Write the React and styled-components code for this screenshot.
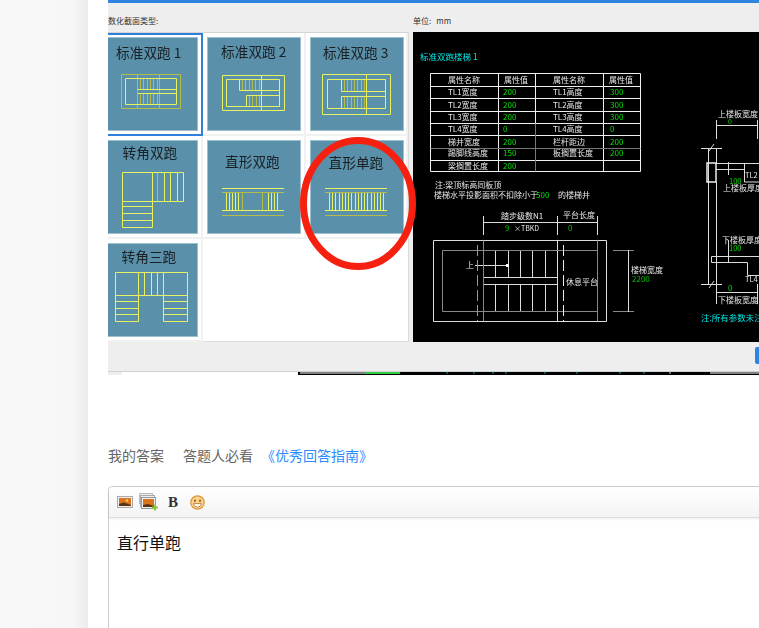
import React from 'react'
import styled, { createGlobalStyle } from 'styled-components'

const CJK = '"Noto Sans CJK SC", "Liberation Sans", sans-serif'

const GlobalStyle = createGlobalStyle`
  html, body {
    margin: 0;
    padding: 0;
    height: 100%;
    overflow: hidden;
    background: #fff;
    font-family: ${CJK};
  }
`

const Page = styled.div`
  display: flex;
  height: 628px;
  overflow: hidden;
`

const Sidebar = styled.div`
  flex: 0 0 88px;
  background: linear-gradient(to right, #f8f8f8 0, #f7f7f7 72px, #ebebeb 88px);
`

const Main = styled.div`
  flex: 1;
  min-width: 0;
  padding-left: 20px;
  overflow: hidden;
`

const Frame = styled.div`
  height: 372px;
  overflow: hidden;
  box-sizing: border-box;
  border-bottom: 1px solid #cfcfd6;
  background: #eee;
`

const Dialog = styled.div`
  margin-left: -8px;
  width: 700px;
`

const BlueBar = styled.div`
  height: 3px;
  background: #2f84e0;
`

const LabelRow = styled.div`
  display: flex;
  height: 29px;
  align-items: center;
  padding-top: 5px;
  box-sizing: border-box;
  font-size: 8px;
  color: #333;
`

const LabelLeft = styled.div`
  flex: 0 0 313px;
`

const Unit = styled.span`
  margin-left: 5px;
`

const Body = styled.div`
  display: flex;
  gap: 4px;
  height: 310px;
`

const Grid = styled.div`
  flex: 0 0 309px;
  min-width: 0;
  box-sizing: border-box;
  display: grid;
  grid-template-columns: 103px 103px 102px;
  grid-auto-rows: 103px;
  background: #fff;
  border: 1px solid #dcdcdc;
  border-left: 0;
  border-top-color: #d4d4d4;
`

const Cell = styled.div`
  box-sizing: border-box;
  border-style: solid;
  border-color: ${p => (p.$selected ? '#2f7fdc' : '#f1f1f1')};
  border-width: ${p => (p.$selected ? '2px' : '0 2px 2px 0')};
  padding: ${p => (p.$selected ? '2px 0 0 2px' : '4px 0 0 4px')};
`

const Card = styled.svg`
  display: block;
  width: 94px;
  height: 94px;
  background: #5a90a9;
  outline: 1px solid #9dbfce;
  outline-offset: -1px;
  filter: blur(0.25px);
`

const ThumbTitle = styled.text`
  font-family: ${CJK};
  font-size: 13.7px;
  fill: #1a2024;
`

const Preview = styled.svg`
  display: block;
  flex: 0 0 346px;
  width: 346px;
  height: 310px;
  background: #000;
  filter: blur(0.35px);
`

const CadText = styled.text`
  font-family: ${CJK};
  font-size: ${p => p.$size || 8}px;
  fill: ${p => p.$color || '#e8e8e8'};
`

const DialogFooter = styled.div`
  height: 29px;
  padding: 5px 0 0 655px;
  box-sizing: border-box;
`

const BlueButton = styled.div`
  width: 40px;
  height: 17px;
  border-radius: 2px;
  background: #2f84e0;
`

const Strip = styled.svg`
  display: block;
  width: 651px;
  height: 3px;
`

const Tabs = styled.div`
  display: flex;
  align-items: center;
  height: 20px;
  margin-top: 70px;
  font-size: 14px;
  line-height: 20px;
  color: #666;
`

const Tab = styled.span`
  margin-right: ${p => p.$gap}px;
`

const GuideLink = styled.span`
  color: #2e8bff;
`

const Editor = styled.div`
  width: 720px;
  height: 200px;
  margin-top: 21px;
  border: 1px solid #ccc;
  border-radius: 4px 4px 0 0;
  background: #fff;
`

const Toolbar = styled.div`
  display: flex;
  align-items: center;
  height: 30px;
  padding-left: 8px;
  border-bottom: 1px solid #ddd;
  border-radius: 4px 4px 0 0;
  background: linear-gradient(#fff, #f3f3f3);
  box-shadow: 0 1px 3px rgba(0, 0, 0, 0.08);
`

const ToolIcon = styled.svg`
  display: block;
  margin-right: ${p => p.$gap}px;
`

const BoldButton = styled.span`
  width: 11px;
  margin-right: 11px;
  font-family: "Liberation Serif", serif;
  font-weight: 700;
  font-size: 15px;
  line-height: 16px;
  color: #333;
`

const EditorText = styled.div`
  padding: 12px 8px;
  font-size: 16px;
  line-height: 24px;
  color: #111;
`

const RedCircle = styled.svg`
  position: absolute;
  left: 300px;
  top: 137px;
  width: 116px;
  height: 133px;
  pointer-events: none;
`

// tread lines for a flight of stairs
const treads = (from, to, step, y1, y2) => {
  let d = ''
  for (let x = from; x <= to + 0.01; x += step) d += `M${Math.round(x) + 0.5} ${y1}V${y2}`
  return d
}

const thumbs = [
  {
    x: 104, y: 37, title: '标准双跑 1', tx: 116, ty: 58, selected: true,
    bright: 'M125.5 78.5H176.5V104.5H125.5ZM137.5 89.5H176.5M137.5 93.5H176.5',
    dim: 'M121.5 74.5H180.5V108.5H121.5ZM137.5 74.5V108.5M159.5 74.5V108.5' + treads(140, 157, 3.3, 79, 89) + treads(140, 157, 3.3, 94, 104),
  },
  {
    x: 207, y: 37, title: '标准双跑 2', tx: 221, ty: 57,
    bright: 'M222.5 75.5H284.5V110.5H222.5ZM226.5 79.5H279.5V106.5H226.5ZM261.5 75.5V110.5M239.5 79.5V90.5H279.5M246.5 106.5V95.5H279.5',
    dim: treads(242, 260, 3.3, 80, 90) + treads(249, 260, 3.3, 95, 106),
  },
  {
    x: 310, y: 37, title: '标准双跑 3', tx: 323, ty: 58,
    bright: 'M322.5 74.5H390.5V114.5H322.5ZM327.5 79.5H385.5V108.5H327.5ZM366.5 74.5V114.5M341.5 79.5V91.5H385.5M341.5 108.5V96.5H385.5',
    dim: treads(344, 364, 3.3, 80, 91) + treads(344, 364, 3.3, 97, 108),
  },
  {
    x: 104, y: 140, title: '转角双跑', tx: 122.5, ty: 158,
    bright: 'M122.5 172.5H183.5V201.5H122.5ZM122.5 201.5V227.5H152.5V172.5M164.5 172.5V201.5M170.5 172.5V201.5M177.5 172.5V201.5M122.5 206.5H152.5M122.5 213.5H152.5M122.5 220.5H152.5',
    dim: 'M157.5 172.5V201.5',
  },
  {
    x: 207, y: 140, title: '直形双跑', tx: 225, ty: 167,
    bright: 'M222 188.5H284M222 210.5H284' + treads(226, 239, 3.1, 193, 210) + treads(268, 280, 3.1, 193, 210),
    dim: 'M222 192.5H284M222 215.5H284' + treads(242, 245, 3.1, 193, 210) + treads(262, 265, 3.1, 193, 210),
  },
  {
    x: 310, y: 140, title: '直形单跑', tx: 328.5, ty: 168,
    bright: 'M325 188.5H387M325 210.5H387' + treads(329, 383.5, 3.2, 193, 210),
    dim: 'M325 192.5H387M325 215.5H387',
  },
  {
    x: 104, y: 243, title: '转角三跑', tx: 121.5, ty: 262,
    bright: 'M115.5 272.5H187.5V321.5H163.5V272.5M115.5 272.5V321.5H138.5V272.5M144.5 272.5V295.5M151.5 272.5V295.5M157.5 272.5V295.5M115.5 295.5H187.5M115.5 301.5H138.5M115.5 308.5H138.5M115.5 314.5H138.5M163.5 301.5H187.5M163.5 308.5H187.5M163.5 314.5H187.5',
    dim: '',
  },
]

const Thumb = ({ t }) => (
  <Cell $selected={t.selected}>
    <Card viewBox={`${t.x} ${t.y} 94 94`}>
      <ThumbTitle x={t.tx} y={t.ty}>{t.title}</ThumbTitle>
      <path d={t.dim} fill="none" stroke="#b4bd4a" />
      <path d={t.bright} fill="none" stroke="#e6f260" />
    </Card>
  </Cell>
)

const tableRows = [
  [92, 'TL1宽度', '200', 'TL1高度', '300'],
  [105, 'TL2宽度', '200', 'TL2高度', '300'],
  [117, 'TL3宽度', '200', 'TL3高度', '300'],
  [129, 'TL4宽度', '0', 'TL4高度', '0'],
  [142, '梯井宽度', '200', '栏杆距边', '200'],
  [153, '踢脚线高度', '150', '板搁置长度', '200'],
  [166, '梁搁置长度', '200', '', ''],
]

// the whole panel is a CAD drawing, coordinates are those of the page
const CadDrawing = () => (
  <Preview viewBox="413 32 346 310">
    <CadText x="420" y="60" $size={8.5} $color="#00e6e6">标准双跑楼梯 1</CadText>

    <path fill="none" stroke="#f0f0f0" d="M430.5 73.5H640.5V171.5H430.5ZM498.5 73.5V171.5M535.5 73.5V123.5M603.5 73.5V171.5M430.5 86.5H640.5M430.5 98.5H640.5M430.5 111.5H640.5M430.5 123.5H640.5M430.5 135.5H640.5M430.5 160.5H640.5" />
    <path fill="none" stroke="#777" d="M535.5 123.5V171.5M430.5 148.5H640.5" />
    <CadText x="448" y="83">属性名称</CadText>
    <CadText x="504" y="83">属性值</CadText>
    <CadText x="553" y="83">属性名称</CadText>
    <CadText x="609" y="83">属性值</CadText>
    {tableRows.map(([y, a, b, c, d]) => (
      <g key={y}>
        <CadText x="448" y={y + 3}>{a}</CadText>
        <CadText x="503" y={y + 3} $color="#00e000">{b}</CadText>
        <CadText x="553" y={y + 3}>{c}</CadText>
        <CadText x="610" y={y + 3} $color="#00e000">{d}</CadText>
      </g>
    ))}

    <CadText x="435" y="188">注:梁顶标高同板顶</CadText>
    <CadText x="434" y="198">楼梯水平投影面积不扣除小于</CadText>
    <CadText x="536" y="198" $color="#00e000">500</CadText>
    <CadText x="558" y="198">的楼梯井</CadText>

    <CadText x="501" y="219">踏步级数N1</CadText>
    <CadText x="563" y="218">平台长度</CadText>
    <path fill="none" stroke="#ddd" d="M483.5 222.5H597.5M483.5 216V235M557.5 216V235M597.5 216V235" />
    <CadText x="505" y="231" $color="#00c000">9</CadText>
    <CadText x="514" y="231" $size={7}>×TBKD</CadText>
    <CadText x="568" y="231" $color="#00c000">0</CadText>

    <path fill="none" stroke="#ddd" d="M433.5 240.5H606.5V321.5H433.5ZM557.5 240.5V321.5M483.5 277.5H557.5M483.5 284.5H557.5M495.5 250V277M508.5 250V277M520.5 250V277M532.5 250V277M545.5 250V277M495.5 285V312M508.5 285V312M520.5 285V312M532.5 285V312M545.5 285V312M475 265.5H507" />
    <path fill="none" stroke="#888" d="M442.5 250.5H597.5V311.5H442.5ZM483.5 240.5V321.5M597.5 240.5V321.5" />
    <path fill="none" stroke="#999" strokeDasharray="11 4" d="M477.5 245V321" />
    <path fill="none" stroke="#eee" strokeDasharray="11 4" d="M563.5 245V321" />
    <rect x="506" y="264" width="3" height="3" fill="#fff" />
    <CadText x="466" y="268">上</CadText>
    <CadText x="566" y="285">休息平台</CadText>

    <path fill="none" stroke="#888" d="M613 250.5H634M613 311.5H634" />
    <path fill="none" stroke="#ddd" d="M628.5 250V312" />
    <CadText x="631" y="273">楼梯宽度</CadText>
    <CadText x="632" y="282" $color="#00c000">2200</CadText>

    <CadText x="718" y="117">上楼板宽度</CadText>
    <CadText x="728" y="124" $size={7} $color="#00e000">0</CadText>
    <path fill="none" stroke="#ddd" d="M716.5 125.5H757.5M716.5 120V139M757.5 120V139M701 148.5H722M709 151L714 144M708.5 148.5V284.5M716.5 148.5V163M716.5 182V284.5M716 169.5H745M728.5 162V175M744.5 163V182H759M716 163.5H759" />
    <rect x="707" y="163" width="9" height="19" fill="none" stroke="#eee" strokeWidth="1.5" />
    <CadText x="745" y="178" $size={7.5}>TL2</CadText>
    <CadText x="729" y="184" $size={7.5} $color="#00e000">100</CadText>
    <CadText x="723" y="191">上楼板厚度</CadText>

    <CadText x="722" y="243">下楼板厚度</CadText>
    <CadText x="729" y="251" $size={7.5} $color="#00e000">100</CadText>
    <path fill="none" stroke="#ddd" d="M711.5 256.5H759M711.5 262.5H747.5V275.5H759M711.5 256.5V262.5M728.5 240V262M701 284.5H722M709 288L714 281M716.5 292.5H757.5M716.5 284V304M757.5 284V304" />
    <CadText x="745" y="282" $size={7.5}>TL4</CadText>
    <CadText x="728" y="291" $color="#00e000">0</CadText>
    <CadText x="718" y="303">下楼板宽度</CadText>
    <CadText x="701" y="321" $size={8.5} $color="#00e6e6">注:所有参数未注明</CadText>
  </Preview>
)

const ImageIcon = () => (
  <ToolIcon $gap={6} width="16" height="13" viewBox="0 0 16 13">
    <rect x="0.5" y="0.5" width="15" height="11" fill="#eee" stroke="#aaa" />
    <rect x="2" y="2" width="12" height="8" fill="#d9741c" />
    <path d="M2 8L7 6.5L14 9V10H2Z" fill="#5a3414" />
    <circle cx="10" cy="4.5" r="1.3" fill="#f8c860" />
  </ToolIcon>
)

const MultiImageIcon = () => (
  <ToolIcon $gap={10} width="19" height="18" viewBox="0 0 19 18">
    <rect x="0.5" y="0.5" width="13" height="10" fill="#eee" stroke="#bbb" />
    <rect x="1.5" y="2.5" width="14" height="11" fill="#eee" stroke="#aaa" />
    <rect x="2.5" y="4.5" width="14" height="11" fill="#eee" stroke="#999" />
    <rect x="4" y="6" width="11" height="8" fill="#d9741c" />
    <path d="M4 12L9 11L15 13V14H4Z" fill="#5a3414" />
    <path d="M13 13.5H15V11.5H17V13.5H19V15.5H17V17.5H15V15.5H13Z" fill="#8cc63f" />
  </ToolIcon>
)

const SmileyIcon = () => (
  <ToolIcon $gap={0} width="15" height="15" viewBox="0 0 15 15">
    <circle cx="7.5" cy="7.5" r="6.7" fill="#f7d58e" stroke="#e0953c" strokeWidth="1.2" />
    <ellipse cx="5" cy="5.8" rx="1" ry="1.3" fill="#a8581a" />
    <ellipse cx="10" cy="5.8" rx="1" ry="1.3" fill="#a8581a" />
    <path d="M3.6 8.6H11.4C11 11 9.4 12 7.5 12C5.6 12 4 11 3.6 8.6Z" fill="#fff" stroke="#a8581a" strokeWidth="0.7" />
  </ToolIcon>
)

const App = () => (
  <>
    <GlobalStyle />
    <Page>
      <Sidebar />
      <Main>
        <Frame>
          <Dialog>
            <BlueBar />
            <LabelRow>
              <LabelLeft>参数化截面类型:</LabelLeft>
              <span>单位:<Unit>mm</Unit></span>
            </LabelRow>
            <Body>
              <Grid>
                {thumbs.map(t => <Thumb key={t.title} t={t} />)}
              </Grid>
              <CadDrawing />
            </Body>
            <DialogFooter>
              <BlueButton />
            </DialogFooter>
          </Dialog>
        </Frame>
        <Strip viewBox="108 372 651 3">
          <rect x="108" y="372" width="14" height="3" fill="#eee" />
          <rect x="298" y="372" width="461" height="3" fill="#000" />
          <rect x="300" y="372" width="65" height="2" fill="#808080" />
          <rect x="365" y="372" width="35" height="2" fill="#2ecc40" />
          <rect x="710" y="372" width="49" height="2" fill="#808080" />
          <path d="M447 372v2M474 372v2M493 372v2M506 372v2M545 372v2M577 372v2M620 372v2M644 372v2" stroke="#1a9a9a" />
          <path d="M670 372v2" stroke="#ccc" />
        </Strip>
        <Tabs>
          <Tab $gap={19}>我的答案</Tab>
          <Tab $gap={8}>答题人必看</Tab>
          <GuideLink>《优秀回答指南》</GuideLink>
        </Tabs>
        <Editor>
          <Toolbar>
            <ImageIcon />
            <MultiImageIcon />
            <BoldButton>B</BoldButton>
            <SmileyIcon />
          </Toolbar>
          <EditorText>直行单跑</EditorText>
        </Editor>
      </Main>
    </Page>
    <RedCircle viewBox="0 0 116 133">
      <ellipse cx="58" cy="66.5" rx="54.5" ry="63" fill="none" stroke="#f5200f" strokeWidth="7" />
    </RedCircle>
  </>
)

export default App
